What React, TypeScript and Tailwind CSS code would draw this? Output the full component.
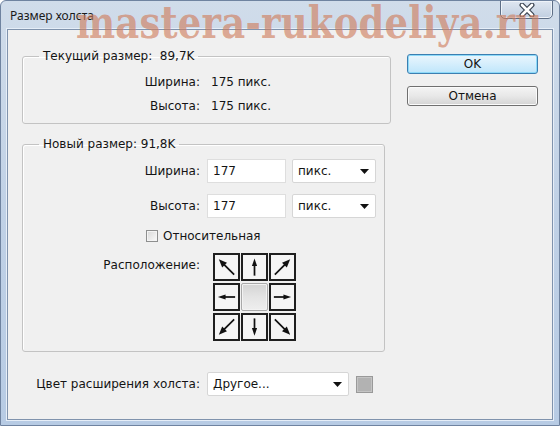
import React from "react"

const Arrow = ({ kind, rot }: { kind: "up" | "diag"; rot: number }) => (
  <svg width="24" height="24" viewBox="0 0 24 24">
    <g transform={`rotate(${rot} 12 12)`}>
      {kind === "up" ? (
        <>
          <line x1="12" y1="21" x2="12" y2="9" stroke="#111" strokeWidth="1.8" />
          <polygon points="12,3 9.3,11 14.7,11" fill="#111" />
        </>
      ) : (
        <>
          <line x1="20" y1="20" x2="9" y2="9" stroke="#111" strokeWidth="1.8" />
          <polygon points="4,4 12.5,7.5 7.5,12.5" fill="#111" />
        </>
      )}
    </g>
  </svg>
)

const Cell = ({ children }: { children?: React.ReactNode }) => (
  <div className="w-[27px] h-[28px] border-2 border-[#1f1f1f] bg-[#f5f5f5] flex items-center justify-center">
    {children}
  </div>
)

function Caret() {
  return (
    <svg width="9" height="5" viewBox="0 0 9 5">
      <polygon points="0,0 9,0 4.5,5" fill="#111" />
    </svg>
  )
}

function Select({ label, width }: { label: string; width: string }) {
  return (
    <div
      className={`${width} h-[24px] bg-white border border-[#d6d6d6] rounded-[2px] flex items-center justify-between pl-[5px] pr-[6px]`}
    >
      <span>{label}</span>
      <Caret />
    </div>
  )
}

export default function App() {
  return (
    <div className="relative w-[560px] h-[426px] overflow-hidden rounded-t-[6px] border border-[#6f83a0] bg-linear-to-b from-[#d0dcea] via-[#c0d1e6] to-[#b7cbe4] flex flex-col px-[6px] pb-[5px] font-['DejaVu_Sans',Verdana,sans-serif] text-[12px] text-[#141414]">
      {/* title bar */}
      <div className="h-[28px] flex items-start justify-between">
        <span className="pt-[6px] pl-[3px] font-['Noto_Sans',sans-serif] text-[12px] text-[#1a1a1a]">
          Размер холста
        </span>
        <div className="w-[53px] h-[19px] -mt-px rounded-b-[5px] border border-[#5d6e86] bg-linear-to-b from-[#dfe7f1] to-[#c0cee0] shadow-[inset_0_0_0_1px_#eef3f9] flex items-center justify-center">
          <svg width="16" height="14" viewBox="0 0 16 14">
            <path d="M3 2 L13 12 M13 2 L3 12" stroke="#3d4654" strokeWidth="5" strokeLinecap="round" />
            <path d="M3 2 L13 12 M13 2 L3 12" stroke="#ffffff" strokeWidth="2.6" strokeLinecap="round" />
          </svg>
        </div>
      </div>

      {/* client area */}
      <div className="flex-1 bg-[#f0f0f0] border border-[#8093ad] shadow-[0_0_0_1px_#e6eef8] flex">
        <div className="pl-[14px] pt-[19px] w-[383px] flex flex-col">
          <fieldset className="border border-[#c3c3c3] rounded-[3px] shadow-[inset_1px_1px_0_#ffffff] w-[369px] pb-[5px]">
            <legend className="ml-[16px] px-[4px] leading-[15px]">Текущий размер:&nbsp; 89,7K</legend>
            <div className="mt-[6px] flex h-[24px] items-center">
              <span className="w-[177px] text-right">Ширина:</span>
              <span className="ml-[11px]">175 пикс.</span>
            </div>
            <div className="flex h-[24px] items-center">
              <span className="w-[177px] text-right">Высота:</span>
              <span className="ml-[11px]">175 пикс.</span>
            </div>
          </fieldset>

          <fieldset className="mt-[13px] border border-[#c3c3c3] rounded-[3px] shadow-[inset_1px_1px_0_#ffffff] w-[363px] pb-[10px]">
            <legend className="ml-[16px] px-[4px] leading-[15px]">Новый размер: 91,8K</legend>
            <div className="mt-[7px] flex items-center">
              <span className="w-[177px] text-right">Ширина:</span>
              <div className="ml-[7px] w-[79px] h-[24px] bg-white border border-[#dedede] flex items-center pl-[5px]">177</div>
              <div className="ml-[6px]">
                <Select label="пикс." width="w-[84px]" />
              </div>
            </div>
            <div className="mt-[11px] flex items-center">
              <span className="w-[177px] text-right">Высота:</span>
              <div className="ml-[7px] w-[79px] h-[24px] bg-white border border-[#dedede] flex items-center pl-[5px]">177</div>
              <div className="ml-[6px]">
                <Select label="пикс." width="w-[84px]" />
              </div>
            </div>
            <div className="mt-[10px] flex items-center pl-[123px] h-[16px]">
              <div className="w-[12px] h-[12px] border border-[#8e8f8f] bg-linear-to-br from-[#d8d8d8] to-[#fbfbfb] shadow-[inset_0_0_0_1px_#f4f4f4]" />
              <span className="ml-[5px]">Относительная</span>
            </div>
            <div className="mt-[9px] flex items-start">
              <span className="w-[177px] text-right mt-[3px]">Расположение:</span>
              <div className="ml-[13px] grid grid-cols-3 gap-x-px gap-y-[2px]">
                <Cell><Arrow kind="diag" rot={0} /></Cell>
                <Cell><Arrow kind="up" rot={0} /></Cell>
                <Cell><Arrow kind="diag" rot={90} /></Cell>
                <Cell><Arrow kind="up" rot={270} /></Cell>
                <div className="w-[27px] h-[28px] rounded-[2px] border border-[#a9a9a9] bg-linear-to-b from-[#d4d4d4] via-[#e4e4e4] to-[#eeeeee] shadow-[inset_0_0_0_1px_#f2f2f2]" />
                <Cell><Arrow kind="up" rot={90} /></Cell>
                <Cell><Arrow kind="diag" rot={270} /></Cell>
                <Cell><Arrow kind="up" rot={180} /></Cell>
                <Cell><Arrow kind="diag" rot={180} /></Cell>
              </div>
            </div>
          </fieldset>

          <div className="mt-[20px] flex items-center">
            <span className="w-[178px] text-right">Цвет расширения холста:</span>
            <div className="ml-[7px]">
              <Select label="Другое..." width="w-[142px]" />
            </div>
            <div className="ml-[7px] w-[17px] h-[17px] border border-[#999999] bg-[#b2b2b2] shadow-[inset_0_0_0_1px_#c4c4c4]" />
          </div>
        </div>

        <div className="ml-[16px] pt-[24px] flex flex-col gap-[12px]">
          <button className="w-[131px] h-[20px] rounded-[3px] border border-[#3c7fb1] bg-linear-to-b from-[#eaf6fd] to-[#bfe6fb] shadow-[inset_0_0_0_1px_#8ddaf9] text-[12px] leading-none">
            OK
          </button>
          <button className="w-[131px] h-[20px] rounded-[3px] border border-[#707070] bg-linear-to-b from-[#f4f4f4] via-[#e8e8e8] to-[#d4d4d4] shadow-[inset_0_0_0_1px_#fbfbfb] text-[12px] leading-none">
            Отмена
          </button>
        </div>
      </div>

      {/* watermark */}
      <div className="absolute left-[75px] top-0 origin-top-left scale-y-[1.2] whitespace-nowrap leading-[37px] font-['DejaVu_Serif',serif] font-bold text-[37px] text-[#cf7d5d]/65 tracking-[0.2px] pointer-events-none select-none">
        mastera-rukodeliya.ru
      </div>
    </div>
  )
}
